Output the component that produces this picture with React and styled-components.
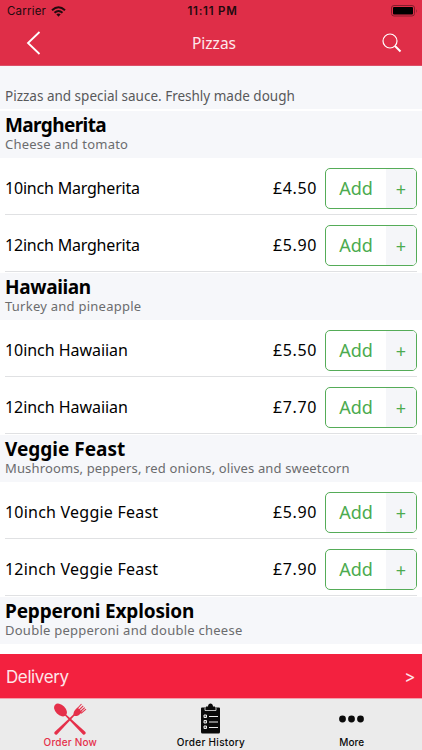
import styled, { createGlobalStyle } from "styled-components";

const GlobalStyle = createGlobalStyle`
  * {
    box-sizing: border-box;
  }

  body {
    margin: 0;
    background: #fff;
  }
`;

const MENU = [
  {
    name: "Margherita",
    detail: "Cheese and tomato",
    track: { name: -0.6, detail: 0.24, item: -0.2 },
    sizes: [["10inch Margherita", "£4.50"], ["12inch Margherita", "£5.90"]],
  },
  {
    name: "Hawaiian",
    detail: "Turkey and pineapple",
    track: { name: -0.35, detail: 0.25, item: -0.05 },
    sizes: [["10inch Hawaiian", "£5.50"], ["12inch Hawaiian", "£7.70"]],
  },
  {
    name: "Veggie Feast",
    detail: "Mushrooms, peppers, red onions, olives and sweetcorn",
    track: { name: 0, detail: 0.14, item: 0.22 },
    sizes: [["10inch Veggie Feast", "£5.90"], ["12inch Veggie Feast", "£7.90"]],
  },
  {
    name: "Pepperoni Explosion",
    detail: "Double pepperoni and double cheese",
    track: { name: -0.15, detail: 0.25, item: 0 },
    sizes: [],
  },
];

const Screen = styled.div`
  display: flex;
  flex-direction: column;
  width: 422px;
  height: 750px;
  overflow: hidden;
  background: #fff;
  color: #000;
  font-family: "Noto Sans", sans-serif;
`;

const Header = styled.header`
  flex: none;
  height: 66px;
  background: #df2e48;
  border-bottom: 1px solid #dc5068;
`;

const StatusBar = styled.div`
  display: grid;
  grid-template-columns: 1fr auto 1fr;
  align-items: center;
  height: 22px;
  padding: 0 4px 0 7px;
  color: #220a0e;
  font: 400 11.5px/22px Inter, sans-serif;
`;

const Carrier = styled.div`
  display: flex;
  align-items: center;
  gap: 5px;
  letter-spacing: 0.2px;
`;

const Clock = styled.div`
  font-weight: 600;
  letter-spacing: 0.75px;
`;

const Battery = styled.svg`
  justify-self: end;
`;

const NavBar = styled.div`
  display: grid;
  grid-template-columns: 1fr auto 1fr;
  align-items: center;
  height: 42px;
  padding: 0 20px 0 26px;
`;

const Title = styled.h1`
  margin: 0;
  color: #fde8eb;
  font-size: 15.5px;
  font-weight: 400;
  line-height: 42px;
`;

const SearchIcon = styled.svg`
  justify-self: end;
`;

const Menu = styled.main`
  flex: 1;
  min-height: 0;
  overflow: hidden;
`;

const Intro = styled.p`
  height: 43px;
  margin: 0 0 2px;
  padding: 20px 5px 0;
  background: #f6f7fa;
  color: #58595b;
  font-size: 13.5px;
  line-height: 21px;
  white-space: nowrap;
`;

const Section = styled.section`
  margin-bottom: 1px;
`;

const SectionHead = styled.div`
  height: 47px;
  padding: 3px 5px 0;
  background: #f6f7fa;
  white-space: nowrap;
`;

const SectionName = styled.h2`
  margin: 0;
  font-size: 19px;
  font-weight: 700;
  letter-spacing: ${(props) => props.$track}px;
  line-height: 22px;
`;

const SectionDetail = styled.p`
  margin: 0;
  color: #6b6c6e;
  font-size: 13px;
  letter-spacing: ${(props) => props.$track}px;
  line-height: 16px;
`;

const Row = styled.div`
  display: flex;
  align-items: center;
  height: 57px;
  margin: 0 5px;
  padding-top: 4px;
  border-bottom: 1px solid #e0e1e3;
`;

const ItemName = styled.span`
  flex: 1;
  font-size: 16px;
  letter-spacing: ${(props) => props.$track}px;
  line-height: 24px;
`;

const Price = styled.span`
  margin-right: 8px;
  font-size: 16px;
  letter-spacing: 0.6px;
  line-height: 24px;
`;

const AddButton = styled.button`
  display: flex;
  width: 92px;
  height: 41px;
  padding: 0;
  overflow: hidden;
  border: 1px solid #55ac58;
  border-radius: 5px;
  background: #fff;
  color: #4cab4f;
  font: 400 18px/39px "Noto Sans", sans-serif;
`;

const AddLabel = styled.span`
  flex: 1;
`;

const Plus = styled.span`
  width: 30px;
  padding-top: 1px;
  background: #f5f6f9;
`;

const Delivery = styled.div`
  display: flex;
  flex: none;
  align-items: center;
  justify-content: space-between;
  height: 45px;
  padding: 2px 7px 0 6px;
  border-bottom: 1px solid #f4a0ac;
  background: #f3213f;
  color: #fde6e9;
  font: 400 17px/42px Inter, sans-serif;
  letter-spacing: -0.4px;
`;

const TabBar = styled.nav`
  display: grid;
  flex: none;
  grid-template-columns: repeat(3, 1fr);
  height: 51px;
  background: #ebebeb;
`;

const Tab = styled.div`
  display: flex;
  flex-direction: column;
  align-items: center;
  padding-top: 4px;
  color: ${(props) => (props.$active ? "#e5304a" : "#0a0a0a")};
  font: 500 10px/13px Inter, sans-serif;
  letter-spacing: ${(props) => props.$track || 0}px;
`;

const TabIcon = styled.svg`
  display: block;
`;

function Cutlery() {
  return (
    <TabIcon width="34" height="33" viewBox="0 0 34 33" fill="currentColor">
      <ellipse cx="7.500" cy="7" rx="7.600" ry="5" transform="rotate(45 7.500 7)" />
      <path d="M11 11.600 12 10.600 32.200 28.800c1.600 1.600-.9 4-2.400 2.400Z" />
      <path d="M21.500 10.600 22.500 11.600 4.200 31.200C2.700 32.800.2 30.400 1.800 28.800Z" />
      <path d="M20.500 12.500c-.2-3 .5-4.500 2-6l2-2L29 9l-2.500 2.500c-1.500 1.500-3.200 2-6 1Z" />
      <path d="m24 6 4.500-5M25.500 7.500l4.700-4.700M27 9l4.700-4.400M28 10.300l5-4.200" fill="none" stroke="currentColor" strokeWidth="1.100" />
    </TabIcon>
  );
}

function Clipboard() {
  return (
    <TabIcon width="22" height="33" viewBox="0 0 22 33">
      <path d="M2 4.500h4V3.500h2c0-4 5-4 5 0h2v1h4q1 0 1 1V29q0 1.500-1.500 1.500h-16Q1 30.500 1 29V5.500q0-1 1-1Z" fill="currentColor" />
      <path d="M5 5v2.500h11V5" fill="none" stroke="#ebebeb" strokeWidth=".8" />
      <path d="M4 12h2.500v2.500H4zM4 17.500h2.500V20H4zM4 23h2.500v2.500H4z" fill="#555" stroke="#ebebeb" />
      <path d="M9 13.500h9M9 19h9M9 24.500h9" fill="none" stroke="#ebebeb" />
    </TabIcon>
  );
}

function Dots() {
  return (
    <TabIcon width="26" height="33" viewBox="0 0 26 33" fill="currentColor">
      <circle cx="3.500" cy="16" r="3.400" />
      <circle cx="12.500" cy="16" r="3.400" />
      <circle cx="21.500" cy="16" r="3.400" />
    </TabIcon>
  );
}

function App() {
  return (
    <Screen>
      <GlobalStyle />
      <Header>
        <StatusBar>
          <Carrier>
            Carrier
            <svg width="15" height="11" viewBox="0 0 15 11" fill="none" stroke="currentColor" strokeWidth="2">
              <path d="M1 4.200Q7.500-1.800 14 4.200M3.500 6.800Q7.500 3.200 11.500 6.800" />
              <path d="m5.300 8.300 2.200 2.400 2.200-2.400q-2.200-1.800-4.400 0Z" fill="currentColor" stroke="none" />
            </svg>
          </Carrier>
          <Clock>11:11 PM</Clock>
          <Battery width="27" height="12" viewBox="0 0 27 12">
            <rect x=".5" y=".5" width="23" height="10.500" rx="2.500" fill="none" stroke="#831d2c" />
            <rect x="2" y="2" width="20" height="7.500" rx="1" fill="#000" />
            <path d="M25 4v4q1.500-2 0-4Z" fill="#831d2c" />
          </Battery>
        </StatusBar>
        <NavBar>
          <svg width="15" height="24" viewBox="0 0 15 24" fill="none" stroke="#fff" strokeWidth="1.800">
            <path d="M13.500 1 2 12l11.500 11" />
          </svg>
          <Title>Pizzas</Title>
          <SearchIcon width="20" height="20" viewBox="0 0 20 20" fill="none" stroke="#fff">
            <circle cx="8" cy="8" r="7" strokeWidth="1.200" />
            <path d="m13 13 5.500 5.500" strokeWidth="2" />
          </SearchIcon>
        </NavBar>
      </Header>
      <Menu>
        <Intro>Pizzas and special sauce. Freshly made dough</Intro>
        {MENU.map(({ name, detail, track, sizes }) => (
          <Section key={name}>
            <SectionHead>
              <SectionName $track={track.name}>{name}</SectionName>
              <SectionDetail $track={track.detail}>{detail}</SectionDetail>
            </SectionHead>
            {sizes.map(([label, price]) => (
              <Row key={label}>
                <ItemName $track={track.item}>{label}</ItemName>
                <Price>{price}</Price>
                <AddButton>
                  <AddLabel>Add</AddLabel>
                  <Plus>+</Plus>
                </AddButton>
              </Row>
            ))}
          </Section>
        ))}
      </Menu>
      <Delivery>
        <span>Delivery</span>
        <span>&gt;</span>
      </Delivery>
      <TabBar>
        <Tab $active $track={0.2}>
          <Cutlery />
          Order Now
        </Tab>
        <Tab $track={0.3}>
          <Clipboard />
          Order History
        </Tab>
        <Tab>
          <Dots />
          More
        </Tab>
      </TabBar>
    </Screen>
  );
}

export default App;
